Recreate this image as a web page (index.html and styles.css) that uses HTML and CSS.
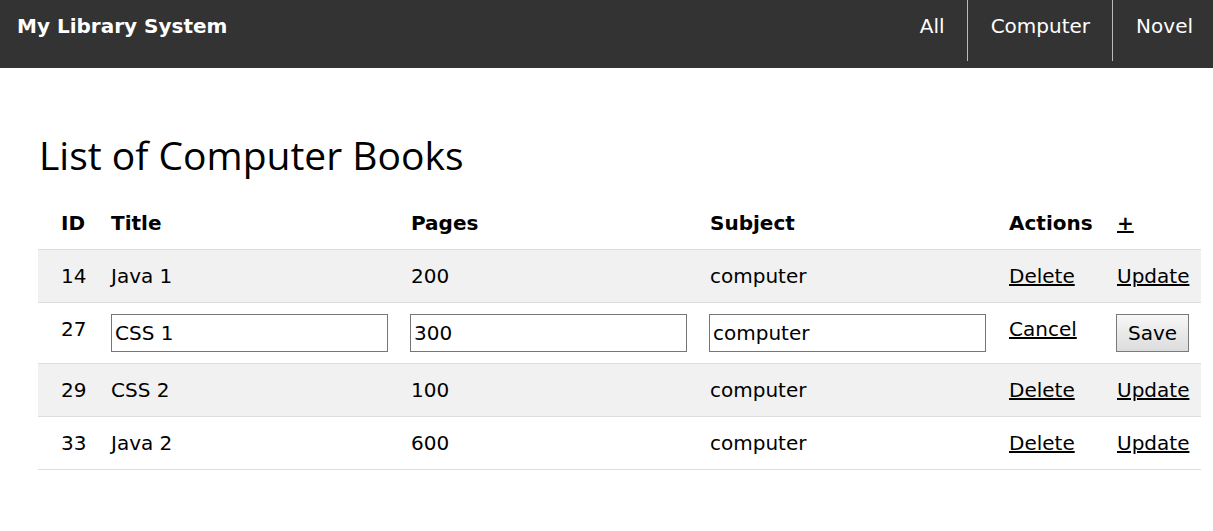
FILE: index.html
```html
<!DOCTYPE html>
<html lang="en">
<head>
<meta charset="utf-8">
<title>My Library System</title>
<link rel="stylesheet" href="styles.css">
</head>
<body>
<header class="topbar">
  <div class="brand">My Library System</div>
  <nav class="nav">
    <a class="nav-link" href="#">All</a>
    <a class="nav-link" href="#">Computer</a>
    <a class="nav-link nav-last" href="#">Novel</a>
  </nav>
</header>
<main class="content">
  <h2 class="title">List of Computer Books</h2>
  <table class="books">
    <colgroup>
      <col class="c-id">
      <col class="c-title">
      <col class="c-pages">
      <col class="c-subject">
      <col class="c-actions">
      <col class="c-extra">
    </colgroup>
    <thead>
      <tr>
        <th>ID</th>
        <th>Title</th>
        <th>Pages</th>
        <th>Subject</th>
        <th>Actions</th>
        <th><a class="link" href="#">+</a></th>
      </tr>
    </thead>
    <tbody>
      <tr class="shaded">
        <td>14</td>
        <td>Java 1</td>
        <td>200</td>
        <td>computer</td>
        <td><a class="link" href="#">Delete</a></td>
        <td><a class="link" href="#">Update</a></td>
      </tr>
      <tr class="editing">
        <td>27</td>
        <td><input class="field" type="text" value="CSS 1"></td>
        <td><input class="field shift" type="text" value="300"></td>
        <td><input class="field shift" type="text" value="computer"></td>
        <td><a class="link" href="#">Cancel</a></td>
        <td><button class="btn" type="button">Save</button></td>
      </tr>
      <tr class="shaded">
        <td>29</td>
        <td>CSS 2</td>
        <td>100</td>
        <td>computer</td>
        <td><a class="link" href="#">Delete</a></td>
        <td><a class="link" href="#">Update</a></td>
      </tr>
      <tr>
        <td>33</td>
        <td>Java 2</td>
        <td>600</td>
        <td>computer</td>
        <td><a class="link" href="#">Delete</a></td>
        <td><a class="link" href="#">Update</a></td>
      </tr>
    </tbody>
  </table>
</main>
</body>
</html>
```
FILE: styles.css
```css
html, body {
  margin: 0;
  padding: 0;
  background: #fff;
  color: #000;
  font-family: "DejaVu Sans", Verdana, sans-serif;
  font-size: 20px;
}

.topbar {
  display: flex;
  justify-content: space-between;
  align-items: flex-start;
  height: 68px;
  background: #333;
  color: #fff;
}

.brand {
  padding-left: 17px;
  font-weight: bold;
  font-size: 20px;
  line-height: 30px;
  padding-top: 11px;
}

.nav {
  display: flex;
}

.nav-link {
  display: block;
  height: 61px;
  box-sizing: border-box;
  padding: 11px 22px 0 23px;
  line-height: 30px;
  color: #fff;
  text-decoration: none;
  border-right: 1px solid #bbb;
}

.nav-last {
  border-right: none;
  padding-right: 20px;
}

.content {
  padding: 0 12px 40px 38px;
}

.title {
  margin: 63px 0 18px 1px;
  font-family: "Open Sans", "Noto Sans", sans-serif;
  font-weight: normal;
  font-size: 39px;
  line-height: 48px;
}

.books {
  width: 1163px;
  table-layout: fixed;
  border-collapse: collapse;
}

.c-id { width: 65px; }
.c-title { width: 300px; }
.c-pages { width: 299px; }
.c-subject { width: 299px; }
.c-actions { width: 108px; }
.c-extra { width: 92px; }

.books th,
.books td {
  text-align: left;
  vertical-align: top;
  padding: 11px 8px;
  line-height: 30px;
  font-size: 20px;
}

.books th:first-child,
.books td:first-child {
  padding-left: 23px;
}

.books th {
  font-weight: bold;
}

.books thead tr,
.books tbody tr {
  border-bottom: 1px solid #ddd;
}

.books tr.shaded {
  background: #f1f1f1;
}

.link {
  color: #000;
  text-decoration: underline;
}

.field {
  display: block;
  box-sizing: border-box;
  width: 277px;
  height: 38px;
  margin: 0;
  padding: 0 3px;
  border: 1px solid #767676;
  background: #fff;
  font-family: "DejaVu Sans", Verdana, sans-serif;
  font-size: 20px;
  color: #000;
}

.field.shift {
  margin-left: -1px;
}

.btn {
  display: block;
  box-sizing: border-box;
  height: 38px;
  margin: 0 0 0 -1px;
  padding: 0 11px;
  border: 1px solid #7a7a7a;
  border-radius: 0;
  background: linear-gradient(#f7f7f7, #dcdcdc);
  font-family: "DejaVu Sans", Verdana, sans-serif;
  font-size: 20px;
  color: #000;
}
```
